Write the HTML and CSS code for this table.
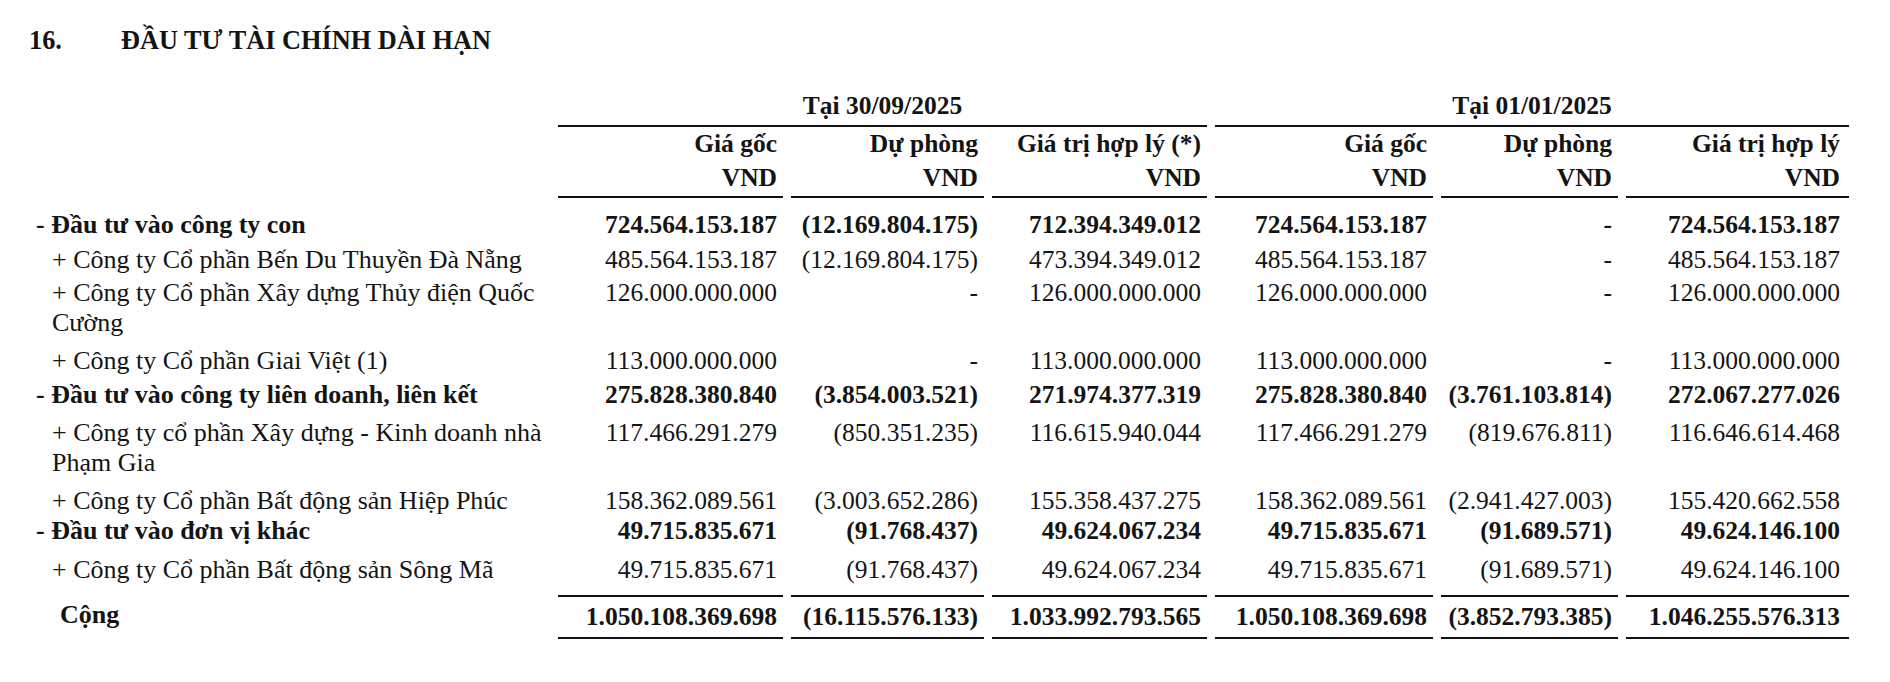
FILE: index.html
```html
<!DOCTYPE html>
<html lang="vi">
<head>
<meta charset="utf-8">
<title>16. Đầu tư tài chính dài hạn</title>
<link rel="stylesheet" href="styles.css">
</head>
<body>
<h2 class="title"><span class="num">16.</span><span>ĐẦU TƯ TÀI CHÍNH DÀI HẠN</span></h2>
<div class="fin">
  <div class="row">
    <div class="lbl"></div>
    <div class="grp g1">Tại 30/09/2025</div>
    <div class="grp g2">Tại 01/01/2025</div>
  </div>
  <div class="row">
    <div class="lbl"></div>
    <div class="hd">Giá gốc<br>VND</div>
    <div class="hd">Dự phòng<br>VND</div>
    <div class="hd">Giá trị hợp lý (*)<br>VND</div>
    <div class="hd">Giá gốc<br>VND</div>
    <div class="hd">Dự phòng<br>VND</div>
    <div class="hd last">Giá trị hợp lý<br>VND</div>
  </div>

  <div class="row head pt-12">
    <div class="lbl">- Đầu tư vào công ty con</div>
    <div class="v">724.564.153.187</div><div class="v">(12.169.804.175)</div><div class="v">712.394.349.012</div>
    <div class="v">724.564.153.187</div><div class="v">-</div><div class="v last">724.564.153.187</div>
  </div>
  <div class="row pt-5">
    <div class="lbl">+ Công ty Cổ phần Bến Du Thuyền Đà Nẵng</div>
    <div class="v">485.564.153.187</div><div class="v">(12.169.804.175)</div><div class="v">473.394.349.012</div>
    <div class="v">485.564.153.187</div><div class="v">-</div><div class="v last">485.564.153.187</div>
  </div>
  <div class="row pt-3">
    <div class="lbl">+ Công ty Cổ phần Xây dựng Thủy điện Quốc Cường</div>
    <div class="v">126.000.000.000</div><div class="v">-</div><div class="v">126.000.000.000</div>
    <div class="v">126.000.000.000</div><div class="v">-</div><div class="v last">126.000.000.000</div>
  </div>
  <div class="row pt-8">
    <div class="lbl">+ Công ty Cổ phần Giai Việt (1)</div>
    <div class="v">113.000.000.000</div><div class="v">-</div><div class="v">113.000.000.000</div>
    <div class="v">113.000.000.000</div><div class="v">-</div><div class="v last">113.000.000.000</div>
  </div>
  <div class="row head pt-4">
    <div class="lbl">- Đầu tư vào công ty liên doanh, liên kết</div>
    <div class="v">275.828.380.840</div><div class="v">(3.854.003.521)</div><div class="v">271.974.377.319</div>
    <div class="v">275.828.380.840</div><div class="v">(3.761.103.814)</div><div class="v last">272.067.277.026</div>
  </div>
  <div class="row pt-8">
    <div class="lbl">+ Công ty cổ phần Xây dựng - Kinh doanh nhà Phạm Gia</div>
    <div class="v">117.466.291.279</div><div class="v">(850.351.235)</div><div class="v">116.615.940.044</div>
    <div class="v">117.466.291.279</div><div class="v">(819.676.811)</div><div class="v last">116.646.614.468</div>
  </div>
  <div class="row pt-8">
    <div class="lbl">+ Công ty Cổ phần Bất động sản Hiệp Phúc</div>
    <div class="v">158.362.089.561</div><div class="v">(3.003.652.286)</div><div class="v">155.358.437.275</div>
    <div class="v">158.362.089.561</div><div class="v">(2.941.427.003)</div><div class="v last">155.420.662.558</div>
  </div>
  <div class="row head pt-0">
    <div class="lbl">- Đầu tư vào đơn vị khác</div>
    <div class="v">49.715.835.671</div><div class="v">(91.768.437)</div><div class="v">49.624.067.234</div>
    <div class="v">49.715.835.671</div><div class="v">(91.689.571)</div><div class="v last">49.624.146.100</div>
  </div>
  <div class="row pt-9">
    <div class="lbl">+ Công ty Cổ phần Bất động sản Sông Mã</div>
    <div class="v">49.715.835.671</div><div class="v">(91.768.437)</div><div class="v">49.624.067.234</div>
    <div class="v">49.715.835.671</div><div class="v">(91.689.571)</div><div class="v last">49.624.146.100</div>
  </div>
  <div class="row total">
    <div class="lbl">Cộng</div>
    <div class="v">1.050.108.369.698</div><div class="v">(16.115.576.133)</div><div class="v">1.033.992.793.565</div>
    <div class="v">1.050.108.369.698</div><div class="v">(3.852.793.385)</div><div class="v last">1.046.255.576.313</div>
  </div>
</div>
</body>
</html>
```

FILE: styles.css
```css
html, body {
  margin: 0;
  padding: 0;
  background: #ffffff;
}

body {
  color: #141414;
  font-family: "Liberation Serif", "Times New Roman", serif;
  font-size: 25.5px;
}

.title {
  display: flex;
  margin: 0;
  padding: 26px 0 0 29px;
  font-size: 26.3px;
  line-height: 30px;
  font-weight: bold;
}

.title .num {
  width: 92px;
}

.fin {
  display: grid;
  grid-template-columns: 550px 225px 193px 215px 218px 177px 223px;
  column-gap: 8px;
  margin-top: 35px;
  line-height: 30px;
}

.row {
  display: contents;
}

.grp {
  text-align: center;
  font-weight: bold;
  padding-bottom: 4px;
  border-bottom: 2px solid #111;
}

.grp.g1 { grid-column: 2 / 5; }
.grp.g2 { grid-column: 5 / 8; }

.hd {
  text-align: right;
  font-weight: bold;
  line-height: 34px;
  padding: 0 6px 1px 0;
  border-bottom: 2px solid #111;
}

.lbl {
  padding-left: 52px;
  font-size: 26px;
}

.head > * {
  font-weight: bold;
}

.head .lbl {
  text-indent: -16px;
}

.v {
  text-align: right;
  padding-right: 6px;
  white-space: nowrap;
}

.v.last,
.hd.last {
  padding-right: 9px;
}

.pt-0 > * { padding-top: 0; }
.pt-3 > * { padding-top: 3px; }
.pt-4 > * { padding-top: 4px; }
.pt-5 > * { padding-top: 5px; }
.pt-8 > * { padding-top: 8px; }
.pt-9 > * { padding-top: 9px; }
.pt-12 > * { padding-top: 12px; }

.total > * {
  margin-top: 10px;
  font-weight: bold;
  padding-top: 5px;
  padding-bottom: 5px;
}

.total .lbl {
  padding-left: 60px;
}

.total .v {
  border-top: 2px solid #111;
  border-bottom: 2px solid #111;
}
```
